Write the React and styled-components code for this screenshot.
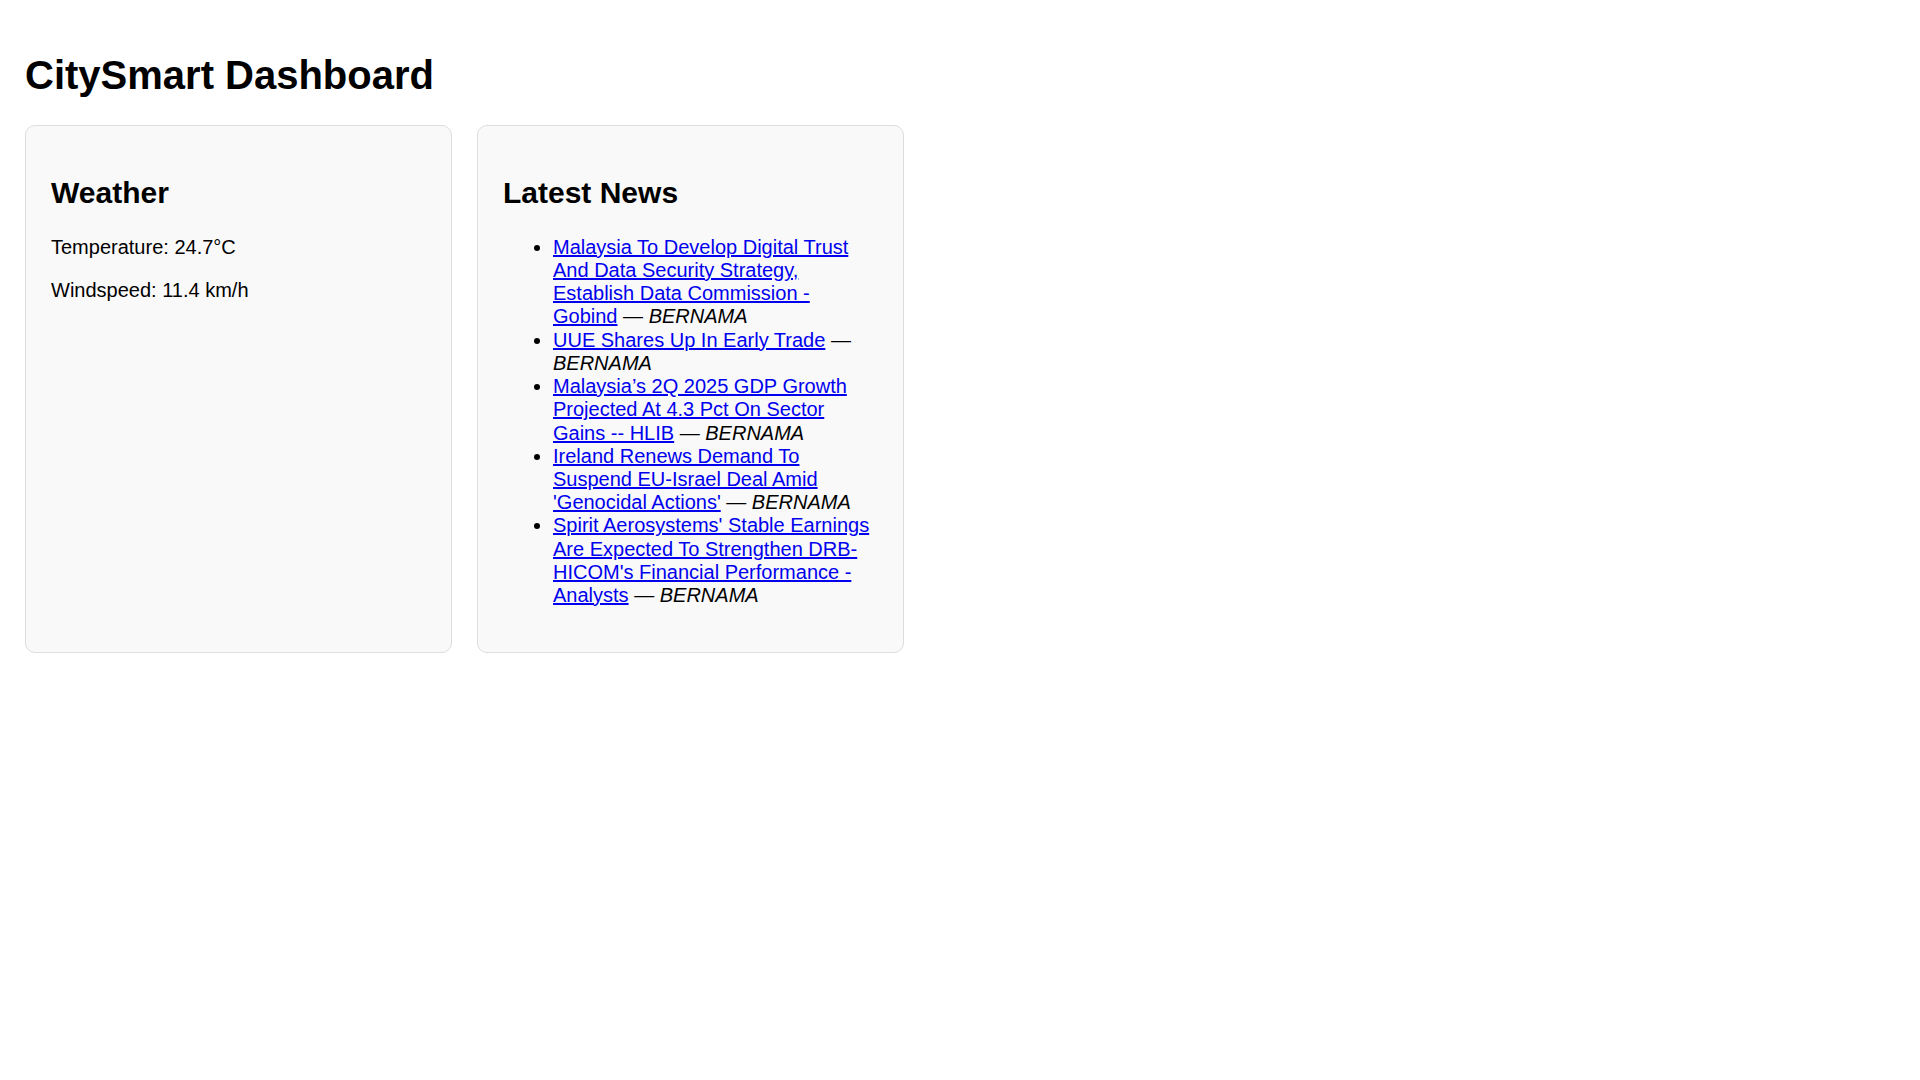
import React from "react";
import styled, { createGlobalStyle } from "styled-components";

const GlobalStyle = createGlobalStyle`
  html, body {
    margin: 0;
    background: #ffffff;
  }
  body {
    padding: 25px;
    font-family: "Liberation Sans", Arial, Helvetica, sans-serif;
    font-size: 20px;
    line-height: 23.2px;
    color: #000000;
  }
`;

const Title = styled.h1`
  font-size: 40px;
  line-height: 46px;
  font-weight: bold;
  margin: 26.8px 0;
`;

const Cards = styled.div`
  display: flex;
  align-items: stretch;
  gap: 25px;
`;

const Card = styled.section`
  box-sizing: content-box;
  width: 375px;
  padding: 26px 25px 25px;
  background: #f9f9f9;
  border: 1px solid #dddddd;
  border-radius: 10px;
`;

const CardTitle = styled.h2`
  font-size: 30px;
  line-height: 34.5px;
  font-weight: bold;
  margin: 24.9px 0;
`;

const Stat = styled.p`
  margin: 20px 0;
`;

const NewsList = styled.ul`
  margin: 20px 0;
  padding-left: 50px;
  list-style: disc;
`;

const NewsItem = styled.li`
  line-height: 23.2px;
`;

const NewsLink = styled.a`
  color: #0000ee;
  text-decoration: underline;
`;

const Source = styled.em`
  font-style: italic;
`;

const news = [
  "Malaysia To Develop Digital Trust And Data Security Strategy, Establish Data Commission - Gobind",
  "UUE Shares Up In Early Trade",
  "Malaysia\u2019s 2Q 2025 GDP Growth Projected At 4.3 Pct On Sector Gains -- HLIB",
  "Ireland Renews Demand To Suspend EU-Israel Deal Amid 'Genocidal Actions'",
  "Spirit Aerosystems' Stable Earnings Are Expected To Strengthen DRB-HICOM's Financial Performance - Analysts",
];

export default function App() {
  return (
    <>
      <GlobalStyle />
      <Title>CitySmart Dashboard</Title>
      <Cards>
        <Card>
          <CardTitle>Weather</CardTitle>
          <Stat>Temperature: 24.7°C</Stat>
          <Stat>Windspeed: 11.4 km/h</Stat>
        </Card>
        <Card>
          <CardTitle>Latest News</CardTitle>
          <NewsList>
            {news.map((t) => (
              <NewsItem key={t}>
                <NewsLink href="#">{t}</NewsLink> — <Source>BERNAMA</Source>
              </NewsItem>
            ))}
          </NewsList>
        </Card>
      </Cards>
    </>
  );
}
